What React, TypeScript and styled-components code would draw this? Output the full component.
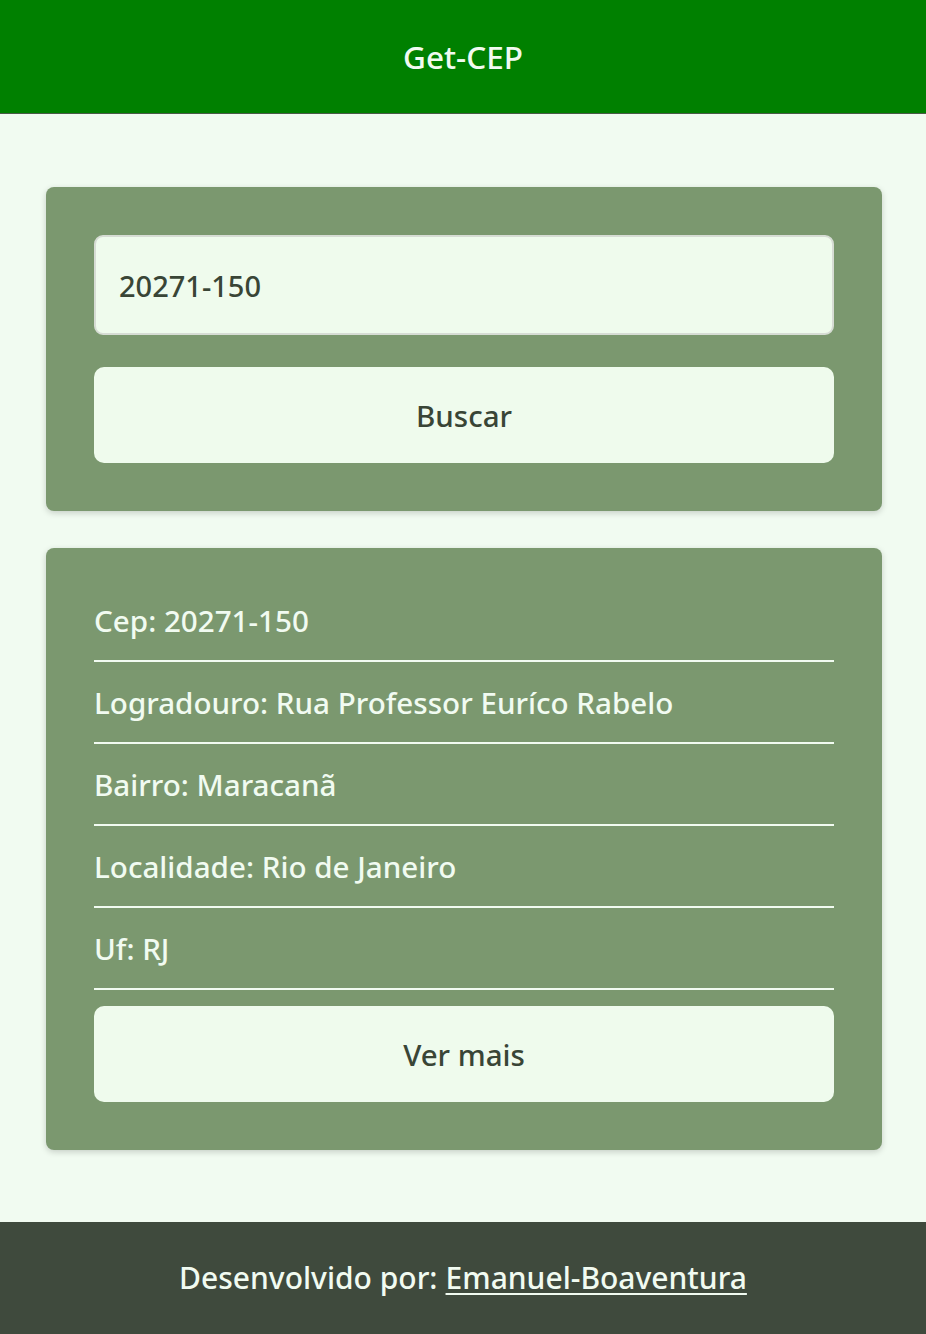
import React from "react";
import styled, { createGlobalStyle } from "styled-components";

const Global = createGlobalStyle`
  * { box-sizing: border-box; }
  html, body { margin: 0; padding: 0; }
  body {
    background: #f1fbf1;
    font-family: "Noto Sans", "Open Sans", sans-serif;
  }
`;

const Page = styled.div`
  min-height: 1334px;
  display: flex;
  flex-direction: column;
`;

const Header = styled.header`
  height: 113px;
  background: #008000;
  display: flex;
  align-items: center;
  justify-content: center;
  box-shadow: 0 1px 0 #4a5a48;
  color: #f1fbf1;
  font-size: 31.5px;
  font-weight: 500;
`;

const Main = styled.main`
  flex: 1;
  display: flex;
  flex-direction: column;
  gap: 37px;
  padding: 74px 44px 71px 46px;
`;

const Card = styled.section<{ $top?: number }>`
  background: #7b986f;
  border-radius: 8px;
  box-shadow: 0 2px 6px rgba(0, 0, 0, 0.18);
  padding: ${(p) => p.$top ?? 48}px 48px 48px;
  display: flex;
  flex-direction: column;
`;

const Input = styled.input`
  height: 100px;
  border: 2px solid #d6dcd4;
  border-radius: 9px;
  background: #effbed;
  padding: 0 23px;
  font-family: inherit;
  font-size: 29px;
  font-weight: 500;
  color: #394536;
  outline: none;
  margin-bottom: 32px;
`;

const Button = styled.button`
  height: 96px;
  border: none;
  border-radius: 10px;
  background: #effbed;
  font-family: inherit;
  font-size: 29.5px;
  font-weight: 500;
  color: #394536;
  cursor: pointer;
`;

const List = styled.ul`
  list-style: none;
  margin: 0 0 16px;
  padding: 0;
`;

const Item = styled.li`
  height: 82px;
  display: flex;
  align-items: center;
  border-bottom: 2px solid #f1fbf1;
  color: #f1fbf1;
  font-size: 29.6px;
  font-weight: 500;
`;

const Footer = styled.footer`
  height: 112px;
  background: #3f4a3d;
  display: flex;
  align-items: center;
  justify-content: center;
  color: #f1fbf1;
  font-size: 30px;
  font-weight: 500;
  padding-bottom: 2px;
`;

const Link = styled.a`
  color: #f1fbf1;
  text-decoration: underline;
  text-underline-offset: 4px;
  text-decoration-thickness: 2px;
  margin-left: 8px;
`;

const data = [
  ["Cep", "20271-150"],
  ["Logradouro", "Rua Professor Euríco Rabelo"],
  ["Bairro", "Maracanã"],
  ["Localidade", "Rio de Janeiro"],
  ["Uf", "RJ"],
];

export default function App() {
  return (
    <Page>
      <Global />
      <Header>Get-CEP</Header>
      <Main>
        <Card>
          <Input defaultValue="20271-150" />
          <Button>Buscar</Button>
        </Card>
        <Card $top={32}>
          <List>
            {data.map(([k, v]) => (
              <Item key={k}>
                {k}: {v}
              </Item>
            ))}
          </List>
          <Button>Ver mais</Button>
        </Card>
      </Main>
      <Footer>
        Desenvolvido por:<Link href="#">Emanuel-Boaventura</Link>
      </Footer>
    </Page>
  );
}
